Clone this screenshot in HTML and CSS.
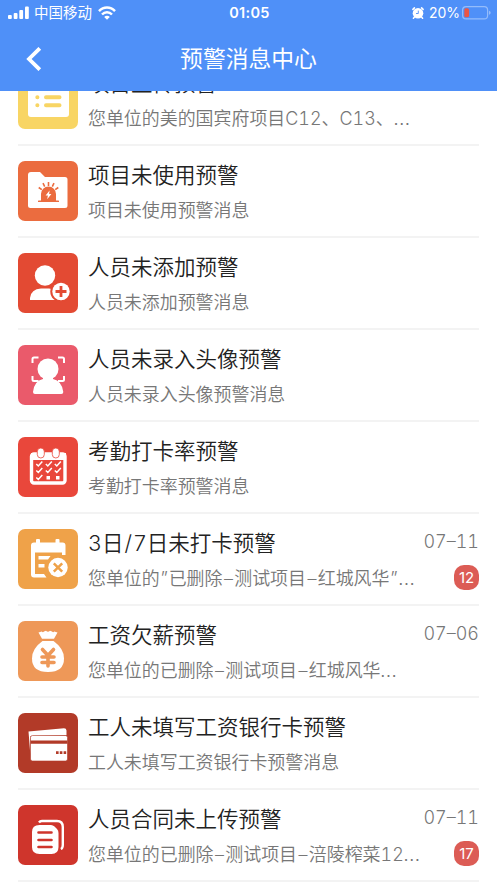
FILE: index.html
```html
<!DOCTYPE html>
<html lang="zh-CN">
<head>
<meta charset="utf-8">
<title>预警消息中心</title>
<link rel="stylesheet" href="styles.css">
</head>
<body>
<div class="screen">
  <header class="header">
    <div class="status">
      <div class="status-left">
        <svg class="signal" viewBox="0 0 21 13" fill="#fff"><rect x="0" y="9" width="3.8" height="4" rx="1"/><rect x="5.700" y="7" width="3.8" height="6" rx="1"/><rect x="11.300" y="4" width="3.8" height="9" rx="1"/><rect x="17" y="0.5" width="3.8" height="12.5" rx="1"/></svg>
        <span class="carrier">中国移动</span>
        <svg class="wifi" viewBox="0 0 18 14" fill="none" stroke="#fff" stroke-width="2.5"><path d="M1 5.2C5.5.4 12.500.4 17 5.200"/><path d="M4 8.500C6.800 5.600 11.200 5.600 14 8.500"/><path d="M6.200 10.900C7.800 9.400 10.200 9.400 11.800 10.900L9 13.800Z" fill="#fff" stroke="none"/></svg>
      </div>
      <span class="clock">01:05</span>
      <div class="status-right">
        <svg class="alarm" viewBox="0 0 12 12"><circle cx="6" cy="6.200" r="5.300" fill="#fff"/><path d="M.9 2.400 2.400.9M11.100 2.400 9.600.9M2.500 10 1.400 11.300M9.500 10l1.100 1.300" stroke="#fff" stroke-width="1.500" stroke-linecap="round"/><path d="M6.300 3.600V6.500H4" stroke="#4f90f8" stroke-width=".9" fill="none"/></svg>
        <span class="percent">20%</span>
        <svg class="battery" viewBox="0 0 29 14"><rect x=".6" y=".6" width="25" height="12.300" rx="3.500" fill="none" stroke="#94bcfb" stroke-width="1.200"/><rect x="2.300" y="2.300" width="4.800" height="9" rx="1.600" fill="#eb5545"/><path d="M27 4.800q1.700.6 1.700 2t-1.700 2z" fill="#94bcfb"/></svg>
      </div>
    </div>
    <div class="nav">
      <svg class="back" viewBox="0 0 16 24" fill="none" stroke="#fff" stroke-width="3.800"><path d="M13.800 1.300 3 12l10.800 10.700"/></svg>
      <h1 class="nav-title">预警消息中心</h1>
    </div>
  </header>
  <main class="viewport">
    <ul class="list">
      <li class="row">
        <svg class="icon yellow" viewBox="0 0 60 60"><rect x="10" y="9" width="41" height="39" rx="3" fill="#fff"/><g stroke="#f8d564" stroke-width="4" stroke-linecap="round"><path d="M19.300 20h.1M28 20H41.500M19.300 28.300h.1M28 28.300H41.500M19.300 36.300h.1M28 36.300H41.500"/></g></svg>
        <div class="body"><div class="line"><h2 class="title">项目上传预警</h2></div><div class="line"><p class="desc">您单位的美的国宾府项目C12、C13、<span class="dots">…</span></p></div></div>
      </li>
      <li class="row">
        <svg class="icon orange" viewBox="0 0 60 60"><path d="M10 14q0-3 3-3h9l5 5h20q2.500 0 2.500 2.500v26q0 2.500-2.500 2.500H12.500Q10 47 10 44.500z" fill="#fff"/><g fill="#eb6c3f"><path d="M23 40v-7a7.500 7.500 0 0 1 15 0v7z"/><rect x="20" y="39.500" width="21" height="1.600" rx=".6"/></g><g stroke="#eb6c3f" stroke-width="1.600"><path d="M30.500 21v4M25 22.200l1.700 3.400M36 22.200l-1.700 3.400M20.700 26.500l3.100 2.200M40.300 26.500l-3.100 2.200"/></g><path d="m31.600 29.500-4 5h2.300l-.7 3.800 4.200-5.300h-2.300z" fill="#fff"/></svg>
        <div class="body"><div class="line"><h2 class="title">项目未使用预警</h2></div><div class="line"><p class="desc">项目未使用预警消息</p></div></div>
      </li>
      <li class="row">
        <svg class="icon red" viewBox="0 0 60 60"><circle cx="27" cy="22.500" r="10.200" fill="#fff"/><path d="M12 47v-2q1-9 11-9.500h8q4 0 7 3v8.500z" fill="#fff"/><circle cx="43" cy="38.500" r="10.700" fill="#e34a33"/><circle cx="43" cy="38.500" r="8.700" fill="#fff"/><path d="M43 33v11M37.500 38.500h11" stroke="#e34a33" stroke-width="2.800"/></svg>
        <div class="body"><div class="line"><h2 class="title">人员未添加预警</h2></div><div class="line"><p class="desc">人员未添加预警消息</p></div></div>
      </li>
      <li class="row">
        <svg class="icon pink" viewBox="0 0 60 60"><g fill="none" stroke="#fff" stroke-width="2"><path d="M14.500 18v-4q0-1.500 1.500-1.500h4.500M40 12.500h4.500q1.500 0 1.500 1.500v4M14.500 31v3.500q0 1.500 1.500 1.500h4.500M40 36h4.500q1.500 0 1.500-1.500V31"/></g><circle cx="30" cy="24" r="10.500" fill="#fff"/><path d="M25 30h10v4q9 2 10.300 13 0 2-2 2H17q-2 0-2-2Q16 36 25 34z" fill="#fff"/></svg>
        <div class="body"><div class="line"><h2 class="title">人员未录入头像预警</h2></div><div class="line"><p class="desc">人员未录入头像预警消息</p></div></div>
      </li>
      <li class="row">
        <svg class="icon scarlet" viewBox="0 0 60 60"><rect x="13.500" y="17" width="33.500" height="29" rx="2.500" fill="none" stroke="#fff" stroke-width="3.400"/><path d="M13 16h35v7H13z" fill="#fff"/><g fill="#fff" stroke="#e9473b" stroke-width=".8"><rect x="19.300" y="11" width="7" height="10" rx="3.500"/><rect x="34.300" y="11" width="7" height="10" rx="3.500"/></g><g fill="none" stroke="#fff" stroke-width="1.500"><path d="m18.300 27 2 2 4-4.500M27.800 27l2 2 4-4.500M36.800 27l2 2 4-4.500M18.300 33.500l2 2 4-4.500M27.800 33.500l2 2 4-4.500M36.800 33.500l2 2 4-4.500M18.300 40.500l2 2 4-4.500"/></g><path d="M28.500 39h3.500v3.500h-3.500zM38 39h3.500v3.500H38z" fill="#fff"/></svg>
        <div class="body"><div class="line"><h2 class="title">考勤打卡率预警</h2></div><div class="line"><p class="desc">考勤打卡率预警消息</p></div></div>
      </li>
      <li class="row">
        <svg class="icon amber" viewBox="0 0 60 60"><path d="M16 13.500h2V11q0-1 1-1h2q1 0 1 1v2.500h15.500V11q0-1 1-1h2q1 0 1 1v2.500h3q3 0 3 3V26H44v-2.500H17V45h9l2.500 3.500H16q-3 0-3-3v-29q0-3 3-3z" fill="#fff"/><path d="M20.500 27h12l-2.500 3.500h-9.500zM20.500 35h6v3.500h-6z" fill="#fff"/><circle cx="40" cy="38.500" r="9.700" fill="#fff"/><path d="m35.800 34.300 8.400 8.400m0-8.400-8.400 8.400" stroke="#efa249" stroke-width="2.500"/></svg>
        <div class="body"><div class="line"><h2 class="title">3日<span class="slash">/</span>7日未打卡预警</h2><time class="date">07–11</time></div><div class="line"><p class="desc">您单位的<span class="quote">”</span>已删除<span class="dash">–</span>测试项目<span class="dash">–</span>红城风华<span class="quote">”</span><span class="dots">…</span></p><span class="badge">12</span></div></div>
      </li>
      <li class="row">
        <svg class="icon peach" viewBox="0 0 60 60"><path d="m20.500 11.500 3.300-1q1 1.500 2.200 0l2-.8q2 2 4 0l2 .8q1.200 1.500 2.200 0l3.300 1L36 17.800H24z" fill="#fff"/><path d="M24.500 20h11Q46 27.500 46 37.500 46 51 30 51T14 37.500Q14 27.500 24.500 20z" fill="#fff"/><g fill="none" stroke="#ee9858" stroke-width="3.600" stroke-linecap="round"><path d="m24.500 28.500 5.500 6 5.500-6M24 36h12M24 41.500h12M30 35v10"/></g></svg>
        <div class="body"><div class="line"><h2 class="title">工资欠薪预警</h2><time class="date">07–06</time></div><div class="line"><p class="desc">您单位的已删除<span class="dash">–</span>测试项目<span class="dash">–</span>红城风华<span class="dots">…</span></p></div></div>
      </li>
      <li class="row">
        <svg class="icon brick" viewBox="0 0 60 60"><path d="M10.500 18.500 46 15.200q2.300 0 2.500 2.300V22l-36 1-.2 18z" fill="#fff"/><path d="M12.500 24.500q0-2 2-2h33q2 0 2 2V46q0 2-2 2h-33q-2 0-2-2z" fill="#fff" stroke="#b23a28" stroke-width=".6"/><path d="M12.500 27.500h37v3.300h-37z" fill="#b23a28"/><path d="M38 38.300h2.600v2.600H38zM41.800 38.300h2.600v2.600h-2.600zM45.600 38.300h2.600v2.600h-2.600z" fill="#b23a28"/></svg>
        <div class="body"><div class="line"><h2 class="title">工人未填写工资银行卡预警</h2></div><div class="line"><p class="desc">工人未填写工资银行卡预警消息</p></div></div>
      </li>
      <li class="row">
        <svg class="icon crimson" viewBox="0 0 60 60"><path d="M21 17.500q1-1.500 3-1.500h15q5.800 0 5.800 6v18q0 3.200-2 4" fill="none" stroke="#fff" stroke-width="2.400"/><path d="M21.500 20H33q2 0 3.500 1.500l2.500 2.500q1.500 1.500 1.500 4v14q0 7-7 7h-12q-7.500 0-7.500-7V27q0-7 7.500-7z" fill="#fff"/><path d="M20.500 27.500h13M20.500 35h13M20.500 42h13" stroke="#cf352c" stroke-width="2.600" stroke-linecap="round"/></svg>
        <div class="body"><div class="line"><h2 class="title">人员合同未上传预警</h2><time class="date">07–11</time></div><div class="line"><p class="desc">您单位的已删除<span class="dash">–</span>测试项目<span class="dash">–</span>涪陵榨菜12<span class="dots">…</span></p><span class="badge">17</span></div></div>
      </li>
    </ul>
  </main>
</div>
</body>
</html>
```
FILE: styles.css
```css
* { box-sizing: border-box; margin: 0; padding: 0; }
body { background: #fff; font-family: Inter, "Noto Sans CJK SC", sans-serif; color: #222; }
.screen { width: 497px; height: 883px; display: flex; flex-direction: column; overflow: hidden; }
.header { height: 91px; flex: none; background: #4f90f8; color: #fff; }
.status { height: 25px; padding: 0 6px 0 8px; display: grid; grid-template-columns: 1fr auto 1fr; align-items: center; font-size: 14.500px; line-height: 25px; }
.status-left, .status-right { display: flex; align-items: center; }
.status-right { justify-content: flex-end; }
.signal { width: 21px; height: 13px; }
.carrier { margin-left: 5px; }
.wifi { width: 18px; height: 14px; margin-left: 6px; }
.clock { font-weight: 600; letter-spacing: .3px; }
.alarm { width: 12px; height: 12px; margin-right: 5px; }
.percent { margin-right: 2px; font-size: 14px; }
.battery { width: 29px; height: 14px; }
.nav { height: 66px; padding: 1px 0 0 26px; display: grid; grid-template-columns: 16px 1fr 42px; align-items: center; }
.back { width: 16px; height: 24px; }
.nav-title { text-align: center; font-size: 22.800px; font-weight: 400; line-height: 34px; }
.viewport { flex: 1; min-height: 0; overflow: hidden; }
.list { list-style: none; margin-top: -37px; padding: 0 18px; }
.row { height: 91.970px; display: flex; align-items: center; gap: 10px; border-bottom: 2px solid #f3f3f3; }
.icon { width: 60px; height: 60px; flex: none; border-radius: 7px; }
.yellow { background: #f8d564; }
.orange { background: #eb6c3f; }
.red { background: #e34a33; }
.pink { background: #ea5a6b; }
.scarlet { background: #e9473b; }
.amber { background: #efa249; }
.peach { background: #ee9858; }
.brick { background: #b23a28; }
.crimson { background: #cf352c; }
.body { flex: 1; min-width: 0; height: 70px; padding-top: 3px; display: flex; flex-direction: column; justify-content: space-between; }
.line { display: flex; justify-content: space-between; align-items: center; height: 32px; white-space: nowrap; }
.title { font-size: 21.500px; font-weight: 350; line-height: 32px; font-feature-settings: "tnum"; }
.desc { padding-top: 2px; font-size: 17.950px; font-weight: 350; color: #777; line-height: 28px; font-feature-settings: "tnum"; }
.dots { font-family: "Liberation Sans", sans-serif; margin-left: -1px; }
.dash { padding: 0 1.400px; }
.quote { padding: 0 .8px; }
.slash { padding: 0 1px; }
.date { align-self: flex-start; font-size: 18px; font-weight: 350; color: #777; line-height: 29px; font-feature-settings: "tnum"; }
.badge { width: 25px; height: 25px; border-radius: 10px; background: #dc5c55; color: #fff; font-size: 15px; line-height: 25px; text-align: center; }
```
